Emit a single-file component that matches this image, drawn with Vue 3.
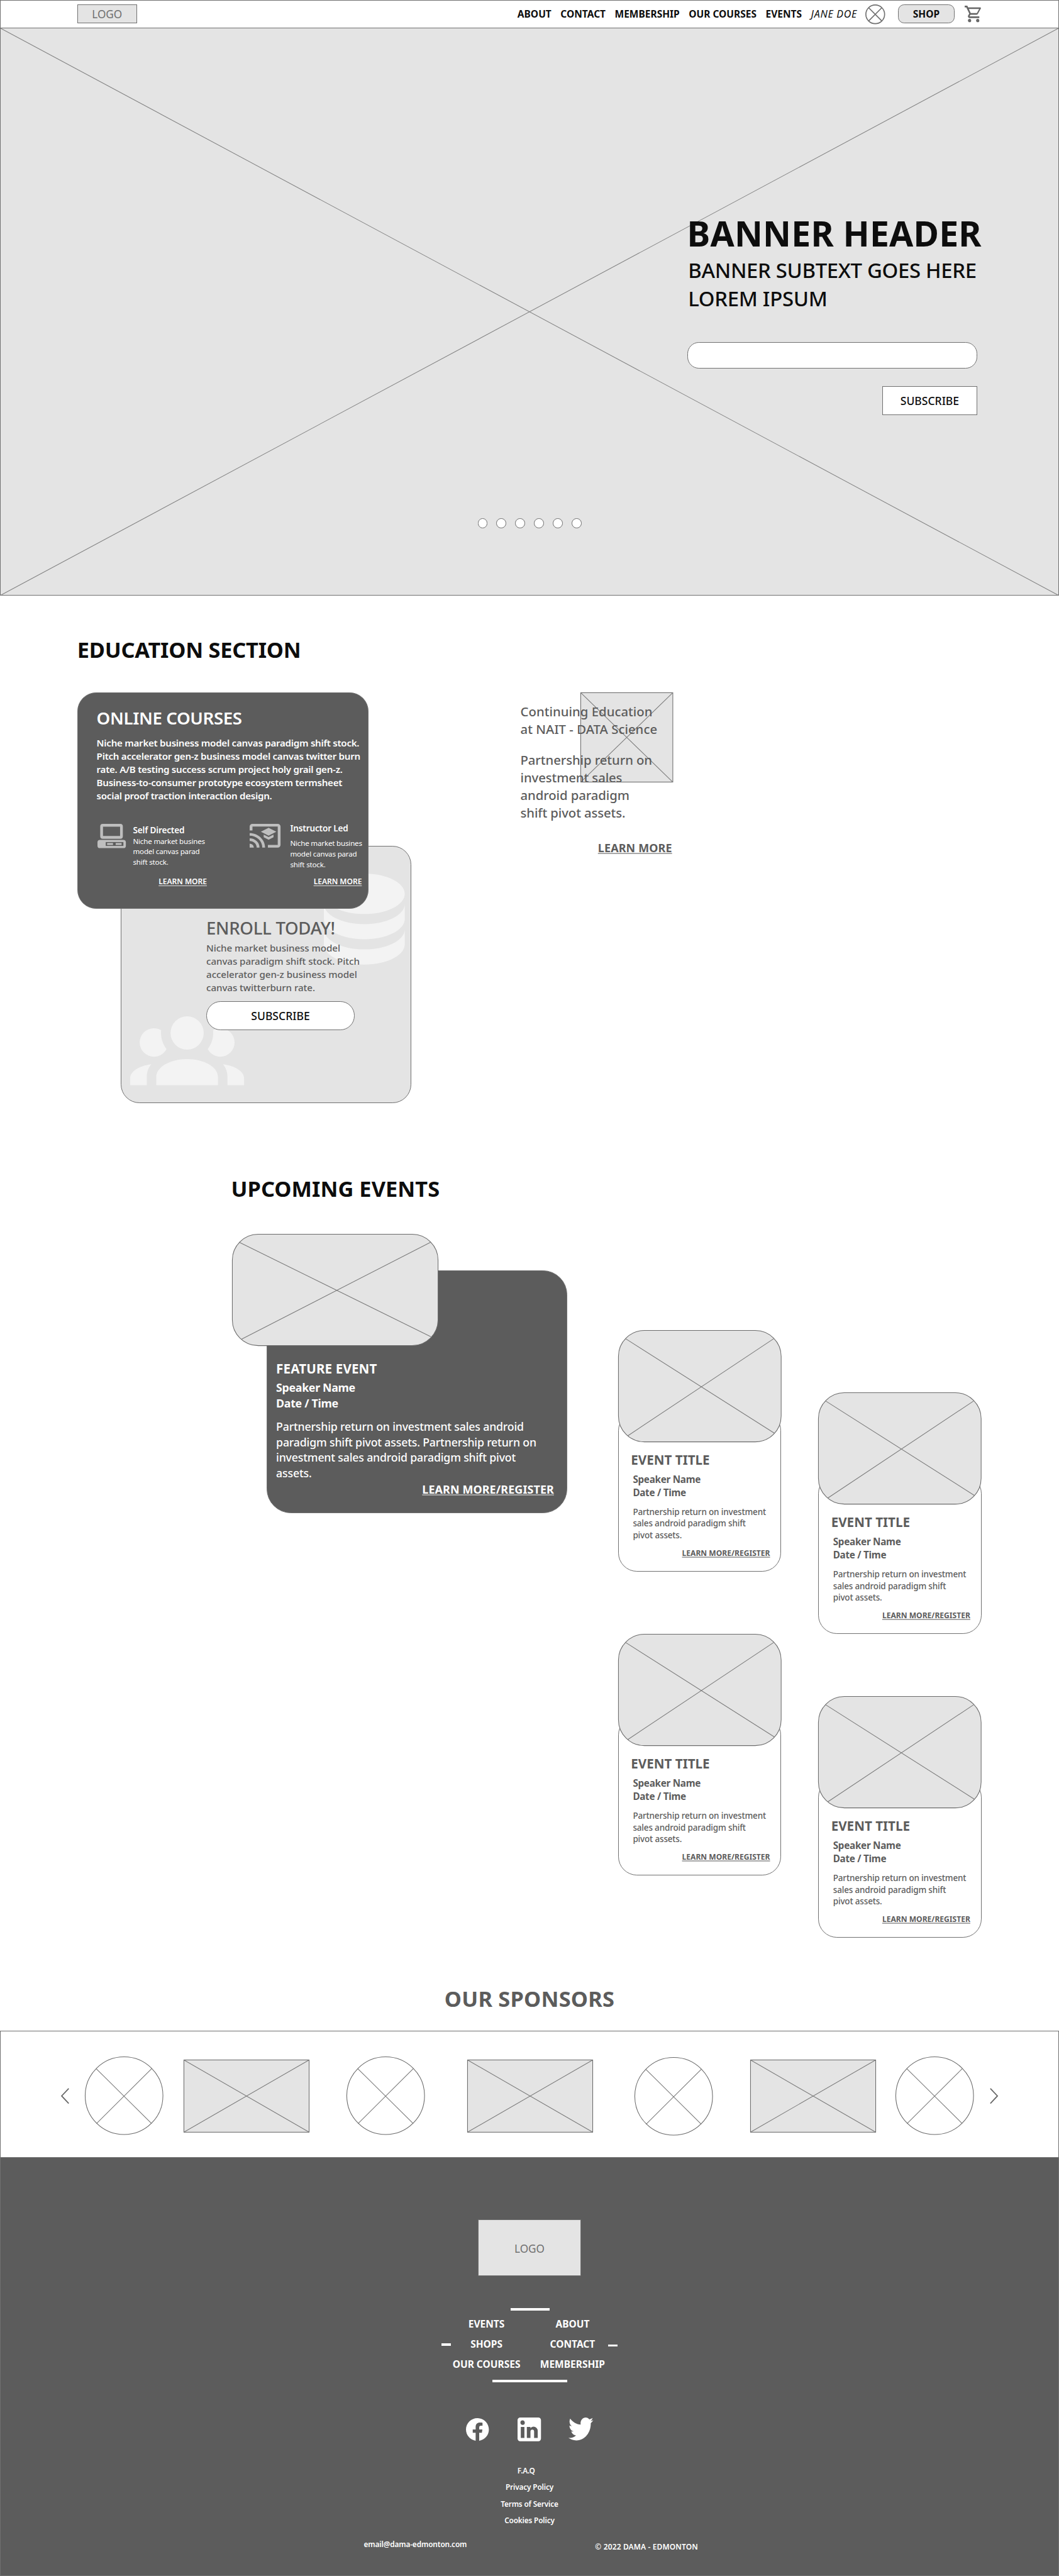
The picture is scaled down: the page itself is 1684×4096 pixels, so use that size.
<script setup>
const navLinks = ['ABOUT', 'CONTACT', 'MEMBERSHIP', 'OUR COURSES', 'EVENTS']
const eventColumns = [[1, 3], [2, 4]]
const sponsors = ['round', 'box', 'round', 'box', 'round', 'box', 'round']
const footerLeft = ['EVENTS', 'SHOPS', 'OUR COURSES']
const footerRight = ['ABOUT', 'CONTACT', 'MEMBERSHIP']
const legal = ['F.A.Q', 'Privacy Policy', 'Terms of Service', 'Cookies Policy']
</script>

<template>
  <div class="page">
    <header class="topbar">
      <div class="logo">LOGO</div>
      <nav class="nav">
        <a v-for="l in navLinks" :key="l">{{ l }}</a>
        <a class="user">JANE DOE</a>
      </nav>
      <svg class="avatar" viewBox="0 0 36 36">
        <circle cx="18" cy="18" r="17" />
        <path d="M6 6L30 30M6 30L30 6" />
      </svg>
      <button class="shop">SHOP</button>
      <svg class="cart" viewBox="1 2 21 20" preserveAspectRatio="none">
        <path d="M17,18A2,2 0 0,1 19,20A2,2 0 0,1 17,22C15.89,22 15,21.1 15,20C15,18.89 15.89,18 17,18M1,2H4.27L5.21,4H20A1,1 0 0,1 21,5C21,5.17 20.95,5.34 20.88,5.5L17.3,11.97C16.96,12.58 16.3,13 15.55,13H8.1L7.2,14.63L7.17,14.75A0.25,0.25 0 0,0 7.42,15H19V17H7C5.89,17 5,16.1 5,15C5,14.65 5.09,14.32 5.24,14.04L6.6,11.59L3,4H1V2M7,18A2,2 0 0,1 9,20A2,2 0 0,1 7,22C5.89,22 5,21.1 5,20C5,18.89 5.89,18 7,18M16,11L18.78,6H6.14L8.5,11H16Z" />
      </svg>
    </header>

    <section class="hero">
      <svg class="cross" viewBox="0 0 100 100" preserveAspectRatio="none">
        <path d="M0 0L100 100M0 100L100 0" />
      </svg>
      <div class="hero-copy">
        <h1>BANNER HEADER</h1>
        <p>BANNER SUBTEXT GOES HERE<br>LOREM IPSUM</p>
        <div class="field"></div>
        <button class="btn">SUBSCRIBE</button>
      </div>
      <div class="dots"><i v-for="n in 6" :key="n"></i></div>
    </section>

    <section class="education">
      <h2 class="title">EDUCATION SECTION</h2>
      <div class="edu-row">
        <div class="stack">
          <article class="courses">
            <h3>ONLINE COURSES</h3>
            <p class="lead">
              Niche market business model canvas paradigm shift stock.<br>
              Pitch accelerator gen-z business model canvas twitter burn<br>
              rate. A/B testing success scrum project holy grail gen-z.<br>
              Business-to-consumer prototype ecosystem termsheet<br>
              social proof traction interaction design.
            </p>
            <div class="options">
              <div class="option self">
                <svg viewBox="0 0 51.5 44">
                  <rect x="7.5" y="2.5" width="36" height="22" rx="2" fill="none" stroke="#bebebe" stroke-width="5" />
                  <rect x="0" y="29" width="51.5" height="15" rx="4.5" fill="#bebebe" />
                  <rect x="15" y="33" width="32" height="7" fill="#5c5c5c" />
                  <path d="M17.5 34.8h10.7v3.4H17.5zM33 34.8h10.7v3.4H33z" fill="#bebebe" />
                </svg>
                <div class="option-text">
                  <h4>Self Directed</h4>
                  <p>Niche market busines<br>model canvas parad<br>shift stock.</p>
                  <a>LEARN MORE</a>
                </div>
              </div>
              <div class="option led">
                <svg viewBox="1 3 22 18" preserveAspectRatio="none">
                  <path fill="#bebebe" d="M21,3H3C1.89,3 1,3.89 1,5V8H3V5H21V19H14V21H21A2,2 0 0,0 23,19V5C23,3.89 22.1,3 21,3M1,10V12A9,9 0 0,1 10,21H12C12,14.92 7.07,10 1,10M1,14V16A5,5 0 0,1 6,21H8A7,7 0 0,0 1,14M1,18V21H4A3,3 0 0,0 1,18M11,11.09V13.09L14.5,15L18,13.09V11.09L14.5,13L11,11.09M14.5,6L9,9L14.5,12L20,9L14.5,6Z" />
                </svg>
                <div class="option-text">
                  <h4>Instructor Led</h4>
                  <p>Niche market busines<br>model canvas parad<br>shift stock.</p>
                  <a>LEARN MORE</a>
                </div>
              </div>
            </div>
          </article>
          <article class="enroll">
            <svg class="db" viewBox="4 3 16 18">
              <path d="M12,3C7.58,3 4,4.79 4,7C4,9.21 7.58,11 12,11C16.42,11 20,9.21 20,7C20,4.79 16.42,3 12,3M4,9V12C4,14.21 7.58,16 12,16C16.42,16 20,14.21 20,12V9C20,11.21 16.42,13 12,13C7.58,13 4,11.21 4,9M4,14V17C4,19.21 7.58,21 12,21C16.42,21 20,19.21 20,17V14C20,16.21 16.42,18 12,18C7.58,18 4,16.21 4,14Z" />
            </svg>
            <svg class="group" viewBox="0 5.5 24 14.5">
              <path d="M12,5.5A3.5,3.5 0 0,1 15.5,9A3.5,3.5 0 0,1 12,12.5A3.5,3.5 0 0,1 8.5,9A3.5,3.5 0 0,1 12,5.5M5,8C5.56,8 6.08,8.15 6.53,8.42C6.38,9.85 6.8,11.27 7.66,12.38C7.16,13.34 6.16,14 5,14A3,3 0 0,1 2,11A3,3 0 0,1 5,8M19,8A3,3 0 0,1 22,11A3,3 0 0,1 19,14C17.84,14 16.84,13.34 16.34,12.38C17.2,11.27 17.62,9.85 17.47,8.42C17.92,8.15 18.44,8 19,8M5.5,18.25C5.5,16.18 8.41,14.5 12,14.5C15.59,14.5 18.5,16.18 18.5,18.25V20H5.5V18.25M0,20V18.5C0,17.11 1.89,15.94 4.45,15.6C3.86,16.28 3.5,17.22 3.5,18.25V20H0M24,20H20.5V18.25C20.5,17.22 20.14,16.28 19.55,15.6C22.11,15.94 24,17.11 24,18.5V20Z" />
            </svg>
            <div class="enroll-copy">
              <h3>ENROLL TODAY!</h3>
              <p>Niche market business model<br>canvas paradigm shift stock. Pitch<br>accelerator gen-z business model<br>canvas twitterburn rate.</p>
              <button class="btn pill">SUBSCRIBE</button>
            </div>
          </article>
        </div>

        <article class="nait">
          <svg class="thumb" viewBox="0 0 168 163">
            <rect x=".5" y=".5" width="167" height="162" />
            <path d="M.5 .5L167.5 162.5M.5 162.5L167.5 .5" />
          </svg>
          <h4>Continuing Education<br>at NAIT - DATA Science</h4>
          <p>Partnership return on<br>investment sales<br>android paradigm<br>shift pivot assets.</p>
          <a>LEARN MORE</a>
        </article>
      </div>
    </section>

    <section class="events">
      <div class="feature-col">
        <h2 class="title">UPCOMING EVENTS</h2>
        <svg class="feature-img" viewBox="0 0 374 203">
          <rect x=".5" y=".5" width="373" height="202" rx="47" />
          <path d="M13 15L360.5 186.5M17 191L360 15" />
        </svg>
        <article class="feature">
          <h3>FEATURE EVENT</h3>
          <p class="who">Speaker Name<br>Date / Time</p>
          <p class="body">Partnership return on investment sales android<br>paradigm shift pivot assets. Partnership return on<br>investment sales android paradigm shift pivot<br>assets.</p>
          <a>LEARN MORE/REGISTER</a>
        </article>
      </div>
      <div v-for="(col, i) in eventColumns" :key="i" class="event-col">
        <article v-for="e in col" :key="e" class="event">
          <svg viewBox="0 0 296 203">
            <rect x=".5" y=".5" width="295" height="202" rx="47" />
            <path d="M13.5 15.5L283.5 187M17.5 191.5L282 15.5" />
          </svg>
          <div class="event-body">
            <h3>EVENT TITLE</h3>
            <p class="who">Speaker Name<br>Date / Time</p>
            <p class="body">Partnership return on investment<br>sales android paradigm shift<br>pivot assets.</p>
            <a>LEARN MORE/REGISTER</a>
          </div>
        </article>
      </div>
    </section>

    <section class="sponsors">
      <h2 class="title">OUR SPONSORS</h2>
      <div class="strip">
        <svg class="arrow" viewBox="0 0 15 29"><path d="M14 1L1.2 14.5L14 28" /></svg>
        <template v-for="(s, i) in sponsors" :key="i">
          <svg v-if="s === 'round'" class="round" viewBox="0 0 142 142">
            <circle cx="71" cy="71" r="70.5" />
            <path d="M20.5 22L121 121.5M121 22L21 121.5" />
          </svg>
          <svg v-else class="box" viewBox="0 0 228 132">
            <rect x=".5" y=".5" width="227" height="131" />
            <path d="M.5 .5L227.5 131.5M.5 131.5L227.5 .5" />
          </svg>
        </template>
        <svg class="arrow" viewBox="0 0 15 29"><path d="M1 1L13.8 14.5L1 28" /></svg>
      </div>
    </section>

    <footer class="footer">
      <div class="footer-logo">LOGO</div>
      <div class="bar top"></div>
      <div class="sitemap">
        <div class="dash"></div>
        <ul><li v-for="l in footerLeft" :key="l">{{ l }}</li></ul>
        <ul><li v-for="l in footerRight" :key="l">{{ l }}</li></ul>
        <div class="dash low"></div>
      </div>
      <div class="bar bottom"></div>
      <div class="social">
        <svg class="fb" viewBox="2 2.04 20 19.92" preserveAspectRatio="none"><path d="M12 2.04C6.5 2.04 2 6.53 2 12.06C2 17.06 5.66 21.21 10.44 21.96V14.96H7.9V12.06H10.44V9.85C10.44 7.34 11.93 5.96 14.22 5.96C15.31 5.96 16.45 6.15 16.45 6.15V8.62H15.19C13.95 8.62 13.56 9.39 13.56 10.18V12.06H16.34L15.89 14.96H13.56V21.96A10 10 0 0 0 22 12.06C22 6.53 17.5 2.04 12 2.04Z" /></svg>
        <svg class="in" viewBox="3 3 18 18" preserveAspectRatio="none"><path d="M19 3A2 2 0 0 1 21 5V19A2 2 0 0 1 19 21H5A2 2 0 0 1 3 19V5A2 2 0 0 1 5 3H19M18.5 18.5V13.2A3.26 3.26 0 0 0 15.24 9.94C14.39 9.94 13.4 10.46 12.92 11.24V10.13H10.13V18.5H12.92V13.57C12.92 12.8 13.54 12.17 14.31 12.17A1.4 1.4 0 0 1 15.71 13.57V18.5H18.5M6.88 8.56A1.68 1.68 0 0 0 8.56 6.88C8.56 5.95 7.81 5.19 6.88 5.19A1.69 1.69 0 0 0 5.19 6.88C5.19 7.81 5.95 8.56 6.88 8.56M8.27 18.5V10.13H5.5V18.5H8.27Z" /></svg>
        <svg class="tw" viewBox="1.54 4 20.92 17" preserveAspectRatio="none"><path d="M22.46,6C21.69,6.35 20.86,6.58 20,6.69C20.88,6.16 21.56,5.32 21.88,4.31C21.05,4.81 20.13,5.16 19.16,5.36C18.37,4.5 17.26,4 16,4C13.65,4 11.73,5.92 11.73,8.29C11.73,8.63 11.77,8.96 11.84,9.27C8.28,9.09 5.11,7.38 3,4.79C2.63,5.42 2.42,6.16 2.42,6.94C2.42,8.43 3.17,9.75 4.33,10.5C3.62,10.5 2.96,10.3 2.38,10C2.38,10 2.38,10 2.38,10.03C2.38,12.11 3.86,13.85 5.82,14.24C5.46,14.34 5.08,14.39 4.69,14.39C4.42,14.39 4.15,14.36 3.89,14.31C4.43,16 6,17.26 7.89,17.29C6.43,18.45 4.58,19.13 2.56,19.13C2.22,19.13 1.88,19.11 1.54,19.07C3.44,20.29 5.7,21 8.12,21C16,21 20.33,14.46 20.33,8.79C20.33,8.6 20.33,8.42 20.32,8.23C21.16,7.63 21.88,6.87 22.46,6Z" /></svg>
      </div>
      <ul class="legal"><li v-for="l in legal" :key="l">{{ l }}</li></ul>
      <div class="contact">
        <span>email@dama-edmonton.com</span>
        <span class="copy">© 2022 DAMA - EDMONTON</span>
      </div>
    </footer>
  </div>
</template>

<style>
body { background: #fff; }
</style>

<style scoped>
.page {
  zoom: 0.877083;
  width: 1920px;
  height: 4670px;
  overflow: hidden;
  background: #fff;
  color: #5c5c5c;
  font-family: "Noto Sans", "Open Sans", sans-serif;
  white-space: nowrap;
}
.page * { box-sizing: border-box; }
h1, h2, h3, h4, p, ul { margin: 0; padding: 0; list-style: none; }
svg { display: block; flex: none; overflow: visible; }
button { font-family: inherit; padding: 0; margin: 0; }

/* header */
.topbar {
  display: flex;
  align-items: center;
  height: 51px;
  padding: 0 139px;
  border: 1px solid #707070;
  border-bottom-width: 2px;
}
.logo {
  width: 108px;
  height: 34px;
  border: 1px solid #707070;
  background: #e4e4e4;
  color: #707070;
  font-size: 19.6px;
  line-height: 34px;
  text-align: center;
}
.nav {
  display: flex;
  gap: 16.5px;
  margin-left: auto;
  color: #0d0d0d;
  font-size: 17.7px;
  font-weight: 700;
}
.nav .user { font-weight: 400; font-style: italic; font-size: 18.3px; letter-spacing: .8px; }
.avatar { width: 36px; height: 36px; margin-left: 15px; fill: none; stroke: #707070; stroke-width: 1.9; }
.shop {
  width: 103px;
  height: 34px;
  margin-left: 23px;
  border: 1px solid #707070;
  border-radius: 11px;
  background: #e4e4e4;
  color: #0d0d0d;
  font-size: 17.7px;
  font-weight: 700;
}
.cart { width: 31px; height: 30px; margin-left: 18px; fill: #666; }

/* hero */
.hero {
  position: relative;
  height: 1029px;
  padding-top: 329.5px;
  border: 1px solid #707070;
  border-top: 0;
  background: #e4e4e4;
}
.cross { position: absolute; inset: 0; width: 100%; height: 100%; }
.cross path { fill: none; stroke: #828282; stroke-width: 1.15; vector-effect: non-scaling-stroke; }
.hero-copy {
  position: relative;
  display: flex;
  flex-direction: column;
  width: 525px;
  margin-left: 1245.5px;
  color: #0d0d0d;
}
.hero-copy h1 { margin-left: -1px; font-size: 63px; line-height: 85px; letter-spacing: .25px; }
.hero-copy p { margin-left: 1px; font-size: 37.5px; line-height: 51px; font-weight: 500; letter-spacing: -.36px; }
.field { height: 48px; margin-top: 52.5px; border: 1px solid #707070; border-radius: 21px; background: #fff; }
.btn {
  width: 172px;
  height: 52px;
  border: 1px solid #707070;
  background: #fff;
  color: #0d0d0d;
  font-size: 20px;
  font-weight: 500;
}
.hero-copy .btn { align-self: flex-end; margin-top: 32px; }
.dots { position: relative; display: flex; gap: 16px; margin: 188px 0 0 865px; }
.dots i { width: 18px; height: 18px; border: 1px solid #707070; border-radius: 50%; background: #fff; }

/* education */
.title { font-size: 39.2px; line-height: 53px; font-weight: 700; color: #0d0d0d; }
.education { height: 920px; padding: 71.5px 0 0 140px; }
.education .title { letter-spacing: -.27px; }
.edu-row { display: flex; margin-top: 50.5px; }
.stack { width: 803.5px; }
.courses {
  position: relative;
  z-index: 1;
  width: 528px;
  height: 392px;
  padding: 24px 0 0 34px;
  border: 1px solid #707070;
  border-radius: 34px;
  background: #5c5c5c;
  color: #fff;
}
.courses h3 { font-size: 31.5px; line-height: 42px; font-weight: 600; letter-spacing: -.44px; }
.lead { margin-top: 12.5px; font-size: 17.3px; line-height: 24px; font-weight: 600; letter-spacing: -.33px; }
.options { display: flex; margin-top: 36px; }
.option { display: flex; }
.self { margin-left: 2px; }
.self svg { width: 51.5px; height: 44px; margin: 2.5px 12.5px 0 0; }
.self .option-text { width: 134px; padding-top: 4.5px; }
.led { margin-left: 78px; }
.led svg { width: 56px; height: 43px; margin: 2.5px 17px 0 0; }
.led .option-text { width: 130px; padding-top: .5px; }
.option-text { display: flex; flex-direction: column; }
.option h4 { font-size: 15.5px; line-height: 21px; font-weight: 600; letter-spacing: -.18px; }
.option p { font-size: 13.2px; line-height: 19px; letter-spacing: -.2px; }
.led p { margin-top: 8px; }
.option a { align-self: flex-end; margin-top: 16px; font-size: 13.8px; line-height: 19px; font-weight: 600; letter-spacing: -.06px; }
.led a { margin-top: 12px; }
a { text-decoration: none; }
.option a, .nait a, .feature a, .event a {
  text-decoration: underline;
  text-decoration-color: #a8a8a8;
  text-decoration-thickness: 2px;
  text-underline-offset: 1.5px;
}
.option a { text-decoration-color: #dedede; text-decoration-thickness: 1px; text-underline-offset: 2px; }

.enroll {
  position: relative;
  width: 527px;
  height: 466px;
  margin: -113.5px 0 0 78.4px;
  padding: 126.5px 0 0 154.5px;
  border: 1px solid #707070;
  border-radius: 34px;
  background: #e4e4e4;
}
.db, .group { position: absolute; fill: #f3f3f3; }
.db { left: 367.5px; top: 48.5px; width: 146.7px; height: 165px; }
.group { left: 17px; top: 307.5px; width: 206.5px; height: 125px; }
.enroll-copy { position: relative; }
.enroll h3 { font-size: 31.5px; line-height: 42px; font-weight: 500; letter-spacing: -.36px; }
.enroll p { margin-top: 3.5px; font-size: 17.3px; line-height: 24px; font-weight: 500; letter-spacing: -.08px; }
.pill { display: block; width: 269px; margin-top: 12.5px; border-radius: 26px; }

.nait { position: relative; width: 275px; padding-top: 19px; display: flex; flex-direction: column; }
.thumb { position: absolute; left: 108.5px; top: 0; width: 168px; height: 163px; }
.thumb, .feature-img, .event svg, .box { fill: #e4e4e4; stroke: #6a6a6a; stroke-width: 1.2; }
.thumb path, .feature-img path, .event svg path, .box path, .round path { stroke: #7a7a7a; }
.nait h4, .nait p { position: relative; font-size: 23.2px; line-height: 32px; font-weight: 500; }
.nait h4 { letter-spacing: .02px; }
.nait p { margin-top: 23.3px; letter-spacing: -.12px; }
.nait a { align-self: flex-end; margin-top: 35.3px; font-size: 20.5px; line-height: 27px; font-weight: 700; letter-spacing: .15px; }

/* events */
.events { display: flex; height: 1512px; padding: 128.2px 0 0 420.5px; }
.feature-col { width: 699.8px; }
.events .title { margin-left: -1.5px; letter-spacing: .05px; }
.feature-img { position: relative; z-index: 1; width: 374px; height: 203px; margin-top: 56.3px; }
.feature {
  display: flex;
  flex-direction: column;
  width: 545px;
  height: 440px;
  margin: -137px 0 0 63px;
  padding: 160px 23px 0 16px;
  border: 1px solid #707070;
  border-radius: 44px;
  background: #5c5c5c;
  color: #fff;
}
.feature h3 { font-size: 23.5px; line-height: 32px; font-weight: 700; letter-spacing: .15px; }
.feature .who { margin-top: 5px; font-size: 20.3px; line-height: 28px; font-weight: 700; letter-spacing: -.37px; }
.feature .body { margin-top: 14.8px; font-size: 20.2px; line-height: 28px; font-weight: 500; letter-spacing: -.2px; }
.feature a { align-self: flex-end; margin-top: 2.3px; font-size: 20.5px; line-height: 28px; font-weight: 700; letter-spacing: .09px; }

.event-col { display: flex; flex-direction: column; gap: 113px; width: 296px; padding-top: 283px; }
.event-col + .event-col { margin-left: 67px; }
.event-col:last-child { padding-top: 396px; }
.event svg { position: relative; z-index: 1; width: 296px; height: 203px; }
.event-body {
  display: flex;
  flex-direction: column;
  height: 289px;
  margin-top: -54px;
  padding: 69px 19px 0 22.5px;
  border: 1px solid #707070;
  border-radius: 34px;
  background: #fff;
}
.event h3 { font-size: 23.5px; line-height: 32px; font-weight: 700; }
.event .who { margin: 8px 0 0 3.5px; font-size: 17.4px; line-height: 24px; font-weight: 700; letter-spacing: -.32px; }
.event .body { margin: 12.4px 0 0 3.5px; font-size: 15.4px; line-height: 21px; font-weight: 500; letter-spacing: -.19px; }
.event a { align-self: flex-end; margin-top: 13px; font-size: 13.8px; line-height: 19px; font-weight: 700; }

/* sponsors */
.sponsors { height: 399px; padding-top: 85.3px; }
.sponsors .title { color: #5c5c5c; text-align: center; letter-spacing: .25px; }
.strip {
  display: flex;
  align-items: center;
  height: 229px;
  margin-top: 31.7px;
  padding: 5px 0 0 109px;
  border: 1px solid #707070;
  border-bottom: 0;
}
.arrow { width: 15px; height: 29px; fill: none; stroke: #666; stroke-width: 2; }
.round { width: 142px; height: 142px; fill: none; stroke: #6a6a6a; stroke-width: 1.2; }
.box { width: 228px; height: 132px; margin-top: 1px; }
.strip > :nth-child(2) { margin-left: 29.3px; }
.strip > :nth-child(3) { margin-left: 36.2px; }
.strip > :nth-child(4) { margin-left: 68px; }
.strip > :nth-child(5) { margin-left: 76.5px; }
.strip > :nth-child(6) { margin: 2px 0 0 75px; }
.strip > :nth-child(7) { margin-left: 68px; }
.strip > :nth-child(8) { margin-left: 36px; }
.strip > :nth-child(9) { margin-left: 28.5px; }

/* footer */
.footer {
  display: flex;
  flex-direction: column;
  align-items: center;
  height: 759px;
  padding-top: 111px;
  border: 1px solid #707070;
  background: #5c5c5c;
  color: #fff;
}
.footer-logo {
  width: 187px;
  height: 103.5px;
  border: 1px solid #707070;
  background: #e4e4e4;
  color: #707070;
  font-size: 19.6px;
  line-height: 106px;
  text-align: center;
}
.bar { height: 4.5px; background: #fff; }
.bar.top { width: 71px; margin: 58px 0 7px 3px; }
.bar.bottom { width: 135.5px; margin: 10px 0 0 2px; }
.sitemap { display: flex; align-items: center; margin-left: 0; }
.sitemap ul { width: 130px; text-align: center; font-size: 17.7px; line-height: 36.2px; font-weight: 700; }
.sitemap ul + ul { margin-left: 26px; }
.dash { width: 17px; height: 4px; background: #fff; }
.dash.low { margin-top: 4px; }
.social { display: flex; margin: 63.5px 0 0 1px; fill: #fff; }
.fb { width: 41.5px; height: 41px; margin-top: 1.5px; }
.in { width: 42.5px; height: 43px; margin: .5px 50px 0 51.5px; }
.tw { width: 45px; height: 41.5px; }
.legal { margin-top: 37.5px; text-align: center; font-size: 13.5px; line-height: 30px; font-weight: 600; letter-spacing: -.19px; }
.legal li:first-child { padding-right: 12px; }
.contact {
  display: flex;
  justify-content: space-between;
  width: 606px;
  margin: 19.7px 0 0 5px;
  font-size: 13.5px;
  line-height: 20px;
  font-weight: 600;
  letter-spacing: -.15px;
}
.copy { padding-top: 3.5px; font-size: 13.7px; letter-spacing: .15px; }
</style>
